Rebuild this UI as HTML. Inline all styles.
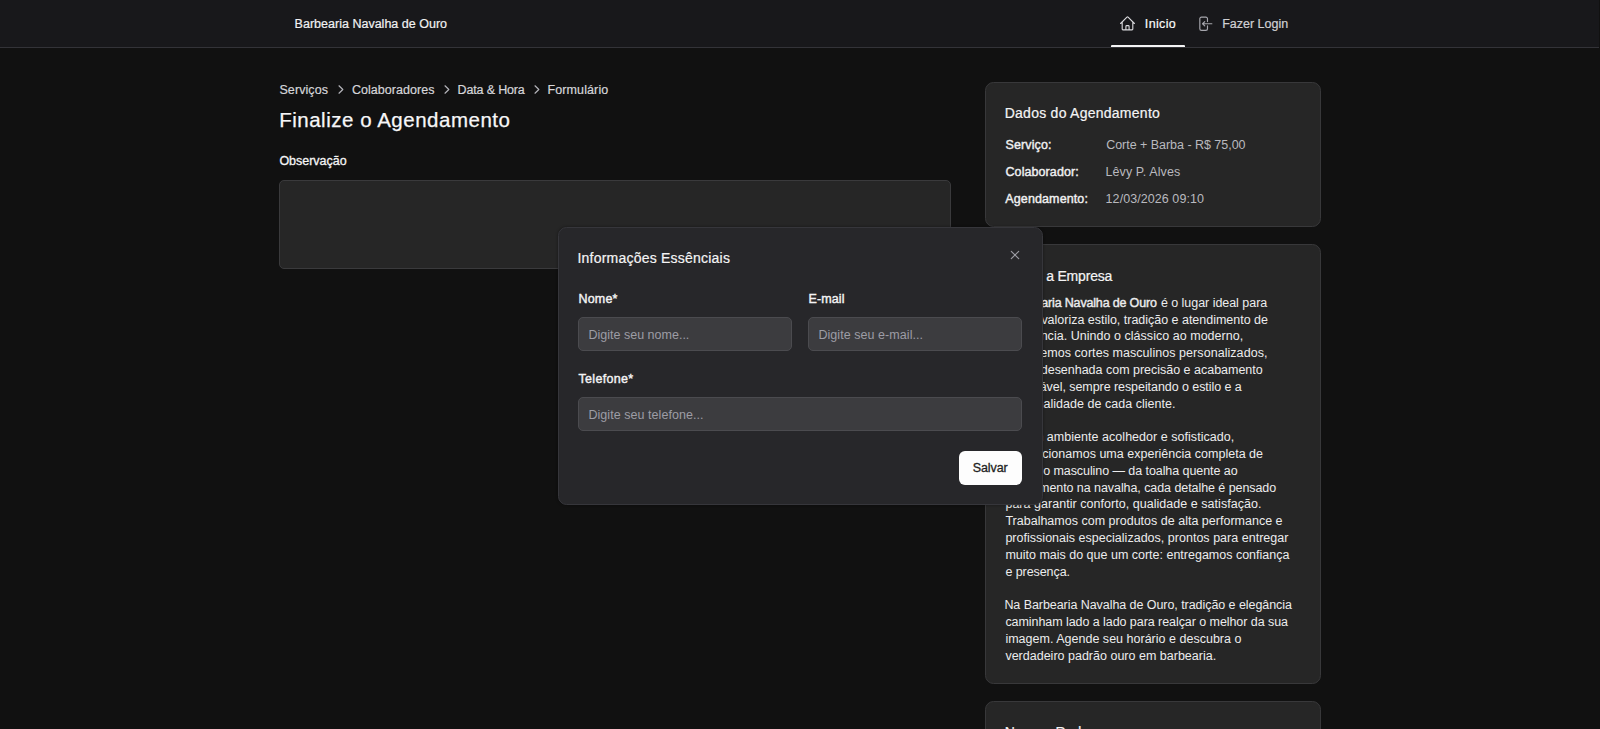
<!DOCTYPE html>
<html lang="pt-BR">
<head>
<meta charset="utf-8">
<title>Barbearia Navalha de Ouro</title>
<style>
*{box-sizing:border-box;margin:0;padding:0}
html,body{width:1600px;height:729px;overflow:hidden;background:#111111;color:#ededee;font-family:"Liberation Sans",sans-serif;font-size:12.5px}
body{position:relative}
.t{position:absolute;white-space:nowrap;line-height:20px;height:20px;font-weight:400}
svg{position:absolute;overflow:visible}
header{position:absolute;left:0;top:0;width:1599px;height:48px;background:#18181b;border-bottom:1px solid #333338}
.tabline{position:absolute;left:1111px;top:45px;width:74px;height:2px;background:#f4f4f5;border-radius:1px 1px 0 0}
.ta{position:absolute;left:279px;top:180px;width:672px;height:89px;background:#262626;border:1px solid #3a3a3c;border-radius:5px}
.card{position:absolute;left:985px;width:336px;background:#262626;border:1px solid #38383a;border-radius:8.5px}
.about{position:absolute;left:0;top:0;width:336px}
.about b{font-weight:400;-webkit-text-stroke:.4px #ececed}
.about span{display:block;position:absolute;white-space:nowrap;line-height:20px;height:20px;color:#ececed}
.modal{position:absolute;left:558px;top:227px;width:485px;height:278px;background:#27272a;border:1px solid #36363b;border-radius:8.5px;box-shadow:0 0 3px rgba(0,0,0,.45)}
.inp{position:absolute;height:34px;background:#3c3c3f;border:1px solid #4b4b4f;border-radius:5px}
.btn{position:absolute;width:63px;height:34px;background:#fdfdfd;border:0;border-radius:6px;font:inherit;font-size:12.5px;line-height:34px;color:#1f1f23;text-align:center;padding:0 0.6px 0 0;white-space:nowrap;display:block}
</style>
</head>
<body>
<header>
<div class="t" style="left:294.6px;top:14px;font-size:12.5px;color:#f1f1f2;letter-spacing:0.012px;-webkit-text-stroke:0.2px #f1f1f2;">Barbearia Navalha de Ouro</div>
<svg style="left:1118.95px;top:14.9px" width="17" height="17" viewBox="0 0 24 24" fill="none" stroke="#dcdcdf" stroke-width="1.55" stroke-linecap="round" stroke-linejoin="round"><path d="m2.25 12 8.954-8.955c.44-.439 1.152-.439 1.591 0L21.75 12M4.5 9.75v10.125c0 .621.504 1.125 1.125 1.125H9.75v-4.875c0-.621.504-1.125 1.125-1.125h2.25c.621 0 1.125.504 1.125 1.125V21h4.125c.621 0 1.125-.504 1.125-1.125V9.75M8.25 21h8.25"/></svg>
<a class="t" style="left:1144.8px;top:14px;font-size:12.5px;color:#fafafa;letter-spacing:0.36px;-webkit-text-stroke:0.2px #fafafa;">Inicio</a>
<svg style="left:1195.7px;top:15.15px" width="17.5" height="17.5" viewBox="0 0 24 24" fill="none" stroke="#a6a6ad" stroke-width="1.6" stroke-linecap="round" stroke-linejoin="round"><path d="M15.75 9V5.25A2.25 2.25 0 0 0 13.5 3h-6a2.25 2.25 0 0 0-2.25 2.25v13.5A2.25 2.25 0 0 0 7.5 21h6a2.25 2.25 0 0 0 2.25-2.25V15M12 9l-3 3m0 0 3 3m-3-3h12.75"/></svg>
<a class="t" style="left:1222.2px;top:14px;font-size:12.5px;color:#d0d0d4;letter-spacing:-0.01px;-webkit-text-stroke:0.2px #d0d0d4;">Fazer Login</a>
<div class="tabline"></div>
</header>
<div class="t" style="left:279.4px;top:80px;font-size:12.5px;color:#d6d6da;letter-spacing:0.1px;-webkit-text-stroke:0.2px #d6d6da;">Serviços</div>
<div class="t" style="left:351.9px;top:80px;font-size:12.5px;color:#d6d6da;letter-spacing:0.042px;-webkit-text-stroke:0.2px #d6d6da;">Colaboradores</div>
<div class="t" style="left:457.5px;top:80px;font-size:12.5px;color:#d6d6da;letter-spacing:-0.15px;-webkit-text-stroke:0.2px #d6d6da;">Data &amp; Hora</div>
<div class="t" style="left:547.5px;top:80px;font-size:12.5px;color:#d6d6da;letter-spacing:0.111px;-webkit-text-stroke:0.2px #d6d6da;">Formulário</div>
<svg style="left:337.7px;top:85px" width="6" height="9" viewBox="0 0 6 9" fill="none" stroke="#b4b4ba" stroke-width="1.2" stroke-linecap="round" stroke-linejoin="round"><path d="M1 .8 4.8 4.5 1 8.2"/></svg>
<svg style="left:444.4px;top:85px" width="6" height="9" viewBox="0 0 6 9" fill="none" stroke="#b4b4ba" stroke-width="1.2" stroke-linecap="round" stroke-linejoin="round"><path d="M1 .8 4.8 4.5 1 8.2"/></svg>
<svg style="left:534.3px;top:85px" width="6" height="9" viewBox="0 0 6 9" fill="none" stroke="#b4b4ba" stroke-width="1.2" stroke-linecap="round" stroke-linejoin="round"><path d="M1 .8 4.8 4.5 1 8.2"/></svg>
<h1 class="t" style="left:279.2px;top:110px;font-size:20.5px;color:#f7f7f8;letter-spacing:0.514px;-webkit-text-stroke:0.25px #f7f7f8;">Finalize o Agendamento</h1>
<label class="t" style="left:279.4px;top:151px;font-size:12.5px;color:#f4f4f5;letter-spacing:-0.022px;-webkit-text-stroke:0.3px #f4f4f5;">Observação</label>
<div class="ta"></div>
<div class="card" style="top:82px;height:145px">
<h2 class="t" style="left:18.7px;top:20px;font-size:14px;color:#f4f4f5;letter-spacing:0.258px;-webkit-text-stroke:0.2px #f4f4f5;">Dados do Agendamento</h2>
<div class="t" style="left:19.5px;top:52px;font-size:12.5px;color:#f1f1f2;letter-spacing:0.129px;-webkit-text-stroke:0.4px #f1f1f2;">Serviço:</div>
<div class="t" style="left:120.2px;top:52px;font-size:12.5px;color:#b9b9bf;letter-spacing:-0.03px;">Corte + Barba - R$ 75,00</div>
<div class="t" style="left:19.5px;top:79px;font-size:12.5px;color:#f1f1f2;letter-spacing:0.082px;-webkit-text-stroke:0.4px #f1f1f2;">Colaborador:</div>
<div class="t" style="left:119.4px;top:79px;font-size:12.5px;color:#b9b9bf;letter-spacing:0.117px;">Lêvy P. Alves</div>
<div class="t" style="left:19.3px;top:106px;font-size:12.5px;color:#f1f1f2;letter-spacing:0.118px;-webkit-text-stroke:0.4px #f1f1f2;">Agendamento:</div>
<div class="t" style="left:119.6px;top:106px;font-size:12.5px;color:#b9b9bf;letter-spacing:0.067px;">12/03/2026 09:10</div>
</div>
<div class="card" style="top:244px;height:440px">
<h2 class="t" style="left:20.03px;top:21px;font-size:14px;color:#f4f4f5;letter-spacing:-0.188px;-webkit-text-stroke:0.2px #f4f4f5;">Sobre a Empresa</h2>
<p class="about">
<span style="left:22.81px;top:48px;letter-spacing:-0.171px;"><b>Barbearia Navalha de Ouro</b></span>
<span style="left:174.9px;top:48px;letter-spacing:-0.037px;">é o lugar ideal para</span>
<span style="left:20.72px;top:65px;letter-spacing:-0.016px;">quem valoriza estilo, tradição e atendimento de</span>
<span style="left:18.32px;top:81px;letter-spacing:0.032px;">excelência. Unindo o clássico ao moderno,</span>
<span style="left:19.18px;top:98px;letter-spacing:0.056px;">oferecemos cortes masculinos personalizados,</span>
<span style="left:19.39px;top:115px;letter-spacing:-0.012px;">barba desenhada com precisão e acabamento</span>
<span style="left:20.69px;top:132px;letter-spacing:-0.063px;">impecável, sempre respeitando o estilo e a</span>
<span style="left:19.04px;top:149px;letter-spacing:0.033px;">personalidade de cada cliente.</span>
<span style="left:17.6px;top:182px;letter-spacing:0.034px;">Em um ambiente acolhedor e sofisticado,</span>
<span style="left:20.12px;top:199px;letter-spacing:0.012px;">proporcionamos uma experiência completa de</span>
<span style="left:20.76px;top:216px;letter-spacing:-0.07px;">cuidado masculino — da toalha quente ao</span>
<span style="left:19.34px;top:233px;letter-spacing:-0.067px;">acabamento na navalha, cada detalhe é pensado</span>
<span style="left:19.4px;top:249px;letter-spacing:0.037px;">para garantir conforto, qualidade e satisfação.</span>
<span style="left:19.4px;top:266px;letter-spacing:0.009px;">Trabalhamos com produtos de alta performance e</span>
<span style="left:19.4px;top:283px;letter-spacing:0.018px;">profissionais especializados, prontos para entregar</span>
<span style="left:19.4px;top:300px;letter-spacing:-0.004px;">muito mais do que um corte: entregamos confiança</span>
<span style="left:19.4px;top:317px;letter-spacing:-0.07px;">e presença.</span>
<span style="left:18.4px;top:350px;letter-spacing:-0.059px;">Na Barbearia Navalha de Ouro, tradição e elegância</span>
<span style="left:19.4px;top:367px;letter-spacing:-0.062px;">caminham lado a lado para realçar o melhor da sua</span>
<span style="left:19.4px;top:384px;letter-spacing:0.013px;">imagem. Agende seu horário e descubra o</span>
<span style="left:19.4px;top:401px;letter-spacing:0.006px;">verdadeiro padrão ouro em barbearia.</span>
</p>
</div>
<div class="card" style="top:701px;height:120px">
<h2 class="t" style="left:18.7px;top:20px;font-size:14px;color:#f4f4f5;letter-spacing:0.027px;-webkit-text-stroke:0.2px #f4f4f5;">Nossas Redes</h2>
</div>
<div class="modal">
<h2 class="t" style="left:18.5px;top:20px;font-size:14px;color:#f4f4f5;letter-spacing:0.219px;-webkit-text-stroke:0.2px #f4f4f5;">Informações Essênciais</h2>
<svg style="left:451.05px;top:21.7px" width="10" height="10" viewBox="0 0 10 10" fill="none" stroke="#9c9ca3" stroke-width="1.15" stroke-linecap="round"><path d="M1.3 1.3l7.4 7.4M8.7 1.3 1.3 8.7"/></svg>
<div class="inp" style="left:19px;top:89.3px;width:214px"></div>
<div class="inp" style="left:249px;top:89.3px;width:214px"></div>
<div class="inp" style="left:19px;top:169px;width:444px"></div>
<button class="btn" style="left:400px;top:223px;letter-spacing:-0.08px;-webkit-text-stroke:0.3px #1f1f23">Salvar</button>
<label class="t" style="left:19.5px;top:61px;font-size:12.5px;color:#f4f4f5;letter-spacing:0.175px;-webkit-text-stroke:0.4px #f4f4f5;">Nome*</label>
<label class="t" style="left:249.5px;top:61px;font-size:12.5px;color:#f4f4f5;letter-spacing:0.1px;-webkit-text-stroke:0.4px #f4f4f5;">E-mail</label>
<div class="t" style="left:29.4px;top:97px;font-size:12.5px;color:#9d9da5;letter-spacing:0.012px;">Digite seu nome...</div>
<div class="t" style="left:259.4px;top:97px;font-size:12.5px;color:#9d9da5;letter-spacing:0.058px;">Digite seu e-mail...</div>
<label class="t" style="left:19.5px;top:141px;font-size:12.5px;color:#f4f4f5;letter-spacing:0.312px;-webkit-text-stroke:0.4px #f4f4f5;">Telefone*</label>
<div class="t" style="left:29.4px;top:177px;font-size:12.5px;color:#9d9da5;letter-spacing:0.052px;">Digite seu telefone...</div>
</div>
</body>
</html>
